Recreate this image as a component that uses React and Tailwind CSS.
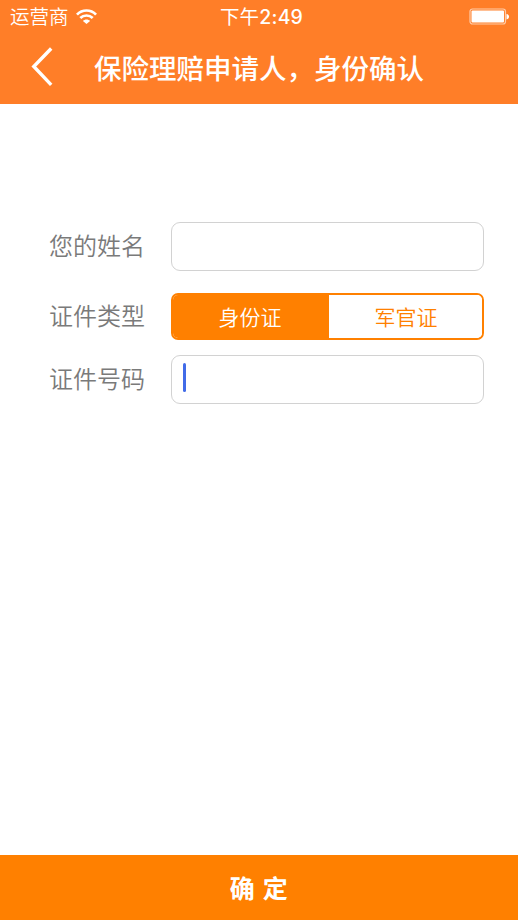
import React from 'react'

const idTypes = [
  { id: 'identity', name: '身份证' },
  { id: 'officer', name: '军官证' }
]

const WifiIcon = () => (
  <svg width="21" height="15" viewBox="0 0 20 15" preserveAspectRatio="none" fill="none" stroke="#fff" strokeWidth="2.6">
    <path d="M0.9 5.6C6 0.1 14 0.1 19.1 5.6" />
    <path d="M4.1 9C7.4 5.6 12.6 5.6 15.9 9" />
    <path d="M10 15L6.6 11.9C8.4 9.9 11.6 9.9 13.4 11.9Z" fill="#fff" stroke="none" />
  </svg>
)

const BatteryIcon = () => (
  <svg width="41" height="17" viewBox="0 0 41 17" fill="none">
    <rect x="1" y="1" width="35.5" height="15" rx="2.5" stroke="#fff" strokeOpacity="0.6" strokeWidth="1.2" />
    <rect x="2.5" y="2.5" width="32.5" height="12" rx="1" fill="#fff" />
    <path d="M37.5 6C40.9 6.4 40.9 11 37.5 11.4Z" fill="#fff" />
  </svg>
)

const StatusBar = () => (
  <div className="grid h-[33px] grid-cols-[1fr_auto_1fr] items-center pl-2.5 pr-2 text-[19.5px] leading-none">
    <div className="flex items-center gap-[7px]">
      <span className="pt-[3px] font-[350]">运营商</span>
      <WifiIcon />
    </div>
    <span className="pt-[3px] pl-[3px] tracking-[0.2px]">
      下午<span className="font-['Inter'] font-medium">2:49</span>
    </span>
    <div className="flex justify-end">
      <BatteryIcon />
    </div>
  </div>
)

const FormRow = ({ label, className, children }) => (
  <div className={`flex items-center ${className}`}>
    <span className="w-[122px] shrink-0 pt-px text-[24px] leading-none font-[350] text-[#7a7a7a]">{label}</span>
    {children}
  </div>
)

const App = () => {
  const [selected, setSelected] = React.useState('identity')

  return (
    <div className="flex h-[920px] w-[518px] flex-col bg-white font-['Liberation_Sans','Noto_Sans_CJK_SC',sans-serif]">
      {/* Header */}
      <header className="h-[103.5px] bg-[#ff7e28] text-white">
        <StatusBar />
        <div className="flex h-[67px] items-center pl-[31px]">
          <button type="button" aria-label="返回" className="mr-[41px]">
            <svg width="22" height="40" viewBox="0 0 22 40" fill="none" stroke="#fff" strokeWidth="3.4">
              <path d="M20.2 1.5L2.8 19.5L20.2 37.8" />
            </svg>
          </button>
          <h1 className="pt-[7px] text-[27.5px] leading-none font-medium">保险理赔申请人，身份确认</h1>
        </div>
      </header>

      {/* Form */}
      <main className="flex-1 pt-[118.5px] pr-[34px] pl-[49px]">
        <FormRow label="您的姓名" className="h-[49px]">
          <div className="h-full flex-1 rounded-[9px] border border-[#d2d2d2]" />
        </FormRow>

        <FormRow label="证件类型" className="mt-[22px] h-[47px]">
          <div className="grid h-full flex-1 grid-cols-[156px_1fr] overflow-hidden rounded-[7px] border-2 border-[#ff8000]">
            {idTypes.map((type) => (
              <button
                key={type.id}
                type="button"
                onClick={() => setSelected(type.id)}
                className={`pt-px text-[21px] leading-none font-[350] first:pr-[2px] last:pl-px ${
                  selected === type.id ? 'bg-[#ff8000] text-white' : 'bg-white text-[#ff8000]'
                }`}
              >
                {type.name}
              </button>
            ))}
          </div>
        </FormRow>

        <FormRow label="证件号码" className="mt-[14.5px] h-[49px]">
          <div className="flex h-full flex-1 rounded-[9px] border border-[#d2d2d2] pt-[7px] pl-[11px]">
            <span className="h-[29px] w-[3px] rounded-full bg-[#416be8]" />
          </div>
        </FormRow>
      </main>

      {/* Confirm */}
      <button type="button" className="h-[65px] bg-[#ff8000] pt-[4px] text-[25px] leading-none font-bold tracking-[0.5px] text-white">
        确 定
      </button>
    </div>
  )
}

export default App
